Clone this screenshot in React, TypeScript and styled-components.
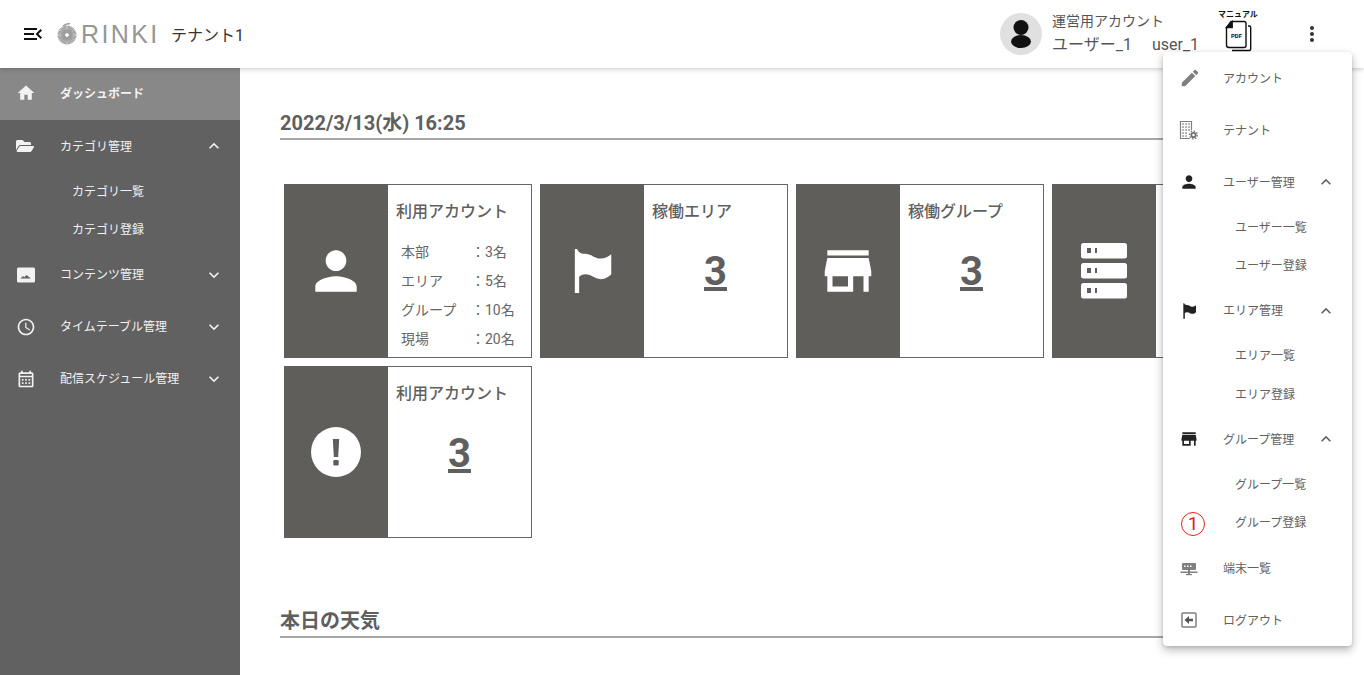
import React from "react";
import styled, { createGlobalStyle } from "styled-components";
import {
  MdMenuOpen,
  MdHome,
  MdOutlineWatchLater,
  MdOutlineCalendarMonth,
  MdEdit,
  MdPerson,
  MdStore,
  MdKeyboardArrowUp,
  MdKeyboardArrowDown,
  MdMoreVert,
} from "react-icons/md";
import { FaFolderOpen } from "react-icons/fa";

const GlobalStyle = createGlobalStyle`
  html, body {
    margin: 0;
    height: 100%;
    overflow: hidden;
    background: #fff;
  }
  body {
    font-family: Roboto, "Noto Sans CJK JP", sans-serif;
    color: #616161;
  }
  #root {
    height: 100%;
  }
`;

const Page = styled.div`
  position: relative;
  height: 675px;
  display: flex;
  flex-direction: column;
  overflow: hidden;
`;

const Header = styled.header`
  position: relative;
  z-index: 2;
  flex: 0 0 68px;
  display: flex;
  align-items: center;
  padding: 0 40px 0 21px;
  background: #fff;
  box-shadow: 0 1px 5px rgba(0, 0, 0, 0.22);
`;

const MenuToggle = styled(MdMenuOpen)`
  font-size: 24px;
  color: #111;
  margin-right: 12px;
`;

const Logo = styled.div`
  display: flex;
  align-items: center;
  gap: 3px;
  width: 114px;
  color: #969696;
`;

const LogoText = styled.span`
  font-family: "Liberation Sans", sans-serif;
  font-size: 25px;
  letter-spacing: 2.4px;
  line-height: 1;
`;

const TenantName = styled.div`
  font-size: 16px;
  color: #333;
`;

const HeaderRight = styled.div`
  margin-left: auto;
  display: flex;
  align-items: center;
`;

const Avatar = styled.div`
  width: 42px;
  height: 42px;
  border-radius: 50%;
  background: #e0e0e0;
  display: flex;
  align-items: center;
  justify-content: center;
  margin-right: 10px;
`;

const UserBlock = styled.div`
  width: 166px;
  color: #555;
`;

const UserRole = styled.div`
  font-size: 14px;
  line-height: 22px;
  margin-top: -1px;
`;

const UserName = styled.div`
  display: flex;
  gap: 20px;
  padding-top: 1px;
  font-size: 16px;
  line-height: 24px;
`;

const Manual = styled.div`
  width: 40px;
  margin-right: 42px;
  display: flex;
  flex-direction: column;
  align-items: center;
  margin-top: -7px;
  color: #111;
`;

const ManualLabel = styled.div`
  font-size: 8px;
  font-weight: 700;
  line-height: 10px;
  white-space: nowrap;
`;

const MoreButton = styled(MdMoreVert)`
  font-size: 24px;
  color: #333;
`;

const Body = styled.div`
  flex: 1;
  display: flex;
  min-height: 0;
`;

const Sidebar = styled.nav`
  flex: 0 0 240px;
  background: #616161;
  color: #f2f2f2;
`;

const NavRow = styled.div<{ $active?: boolean }>`
  height: 52px;
  box-sizing: border-box;
  display: flex;
  align-items: center;
  padding: 0 16px ${({ $active }) => ($active ? "2px" : "0")};
  font-size: 12px;
  background: ${({ $active }) => ($active ? "#888888" : "transparent")};
  font-weight: ${({ $active }) => ($active ? 700 : 400)};
`;

const NavIcon = styled.div<{ $color?: string; $size?: number }>`
  flex: 0 0 44px;
  display: flex;
  align-items: center;
  font-size: ${({ $size }) => $size ?? 20}px;
  color: ${({ $color }) => $color ?? "inherit"};
`;

const NavLabel = styled.div`
  flex: 1;
  white-space: nowrap;
  padding-bottom: 2px;
`;

const Chevron = styled.div`
  display: flex;
  font-size: 20px;
`;

const SubList = styled.div`
  height: 76.7px;
`;

const SubRow = styled.div`
  position: relative;
  height: 38.35px;
  box-sizing: border-box;
  display: flex;
  align-items: center;
  padding: 0 0 2px 72px;
  font-size: 12px;
`;

const Main = styled.main`
  flex: 1;
  padding: 40px 40px 0;
  min-width: 0;
`;

const SectionTitle = styled.h2`
  margin: 0;
  padding-top: 1px;
  font-size: 20px;
  font-weight: 700;
  line-height: 29px;
  color: #5f5f5f;
  border-bottom: 2px solid #a8a8a8;
`;

const CardGrid = styled.div`
  display: flex;
  flex-wrap: wrap;
  gap: 8px;
  padding: 44px 4px 0;
  margin-bottom: 68px;
`;

const Card = styled.div`
  width: 248px;
  min-height: 172px;
  box-sizing: border-box;
  display: flex;
  border: 1px solid #666;
  background: #fff;
`;

const CardIcon = styled.div`
  flex: 0 0 104px;
  margin: -1px 0 -1px -1px;
  background: #5f5e5a;
  color: #fff;
  display: flex;
  align-items: center;
  justify-content: center;
`;

const CardContent = styled.div`
  flex: 1;
  padding: 15px 8px 3px;
  min-width: 0;
`;

const CardTitle = styled.div`
  font-size: 16px;
  font-weight: 500;
  line-height: 24px;
  color: #5f5f5f;
  white-space: nowrap;
`;

const CardValue = styled.a`
  display: block;
  margin-top: 24px;
  text-align: center;
  font-size: 40px;
  font-weight: 700;
  line-height: 48px;
  color: #5f5f5f;
  text-decoration: underline;
`;

const BreakdownList = styled.div`
  margin-top: 14px;
  padding-left: 5px;
`;

const BreakdownRow = styled.div`
  display: flex;
  font-size: 14px;
  line-height: 29px;
  color: #666;
`;

const BreakdownKey = styled.span`
  flex: 0 0 70px;
`;

const DropdownMenu = styled.div`
  position: absolute;
  z-index: 3;
  top: 52px;
  right: 12px;
  width: 189px;
  height: 594px;
  border-radius: 4px;
  background: #fff;
  color: #616161;
  box-shadow: 0 4px 10px rgba(0, 0, 0, 0.28), 0 1px 3px rgba(0, 0, 0, 0.12);
`;

const StepMark = styled.span`
  position: absolute;
  left: 18px;
  top: 8px;
  width: 24px;
  height: 24px;
  box-sizing: border-box;
  border: 1.5px solid #e2231a;
  border-radius: 50%;
  color: #e2231a;
  font-size: 19px;
  line-height: 21px;
  text-align: center;
`;

const PdfIcon = () => (
  <svg width="30" height="32" viewBox="0 0 30 31" fill="none" stroke="#111" strokeWidth="1.4">
    <path d="M25 5.500h1.200a1.500 1.500 0 0 1 1.500 1.500v21.500a1.500 1.500 0 0 1-1.500 1.500H9" />
    <path d="M8 1h13a2 2 0 0 1 2 2v22a2 2 0 0 1-2 2H6a2.500 2.500 0 0 1-2.500-2.500V7z" fill="#fff" />
    <path d="M3.500 7 9.200 1.200V7z" fill="#111" />
    <text x="13.500" y="17" textAnchor="middle" fontSize="6" fontWeight="700" fill="#111" stroke="none" fontFamily="Roboto, sans-serif">
      PDF
    </text>
  </svg>
);

const AvatarIcon = () => (
  <svg width="22" height="28" viewBox="0 0 22 28" fill="#111">
    <ellipse cx="11" cy="7.500" rx="7.500" ry="7.500" />
    <ellipse cx="11" cy="21.500" rx="10" ry="6.500" />
  </svg>
);

const SunburstLogo = () => {
  const rays = Array.from({ length: 40 }, (_, i) => (i * 360) / 40);
  return (
    <svg width="21" height="23" viewBox="0 0 21 23" stroke="#9c9c9c" strokeWidth="1.100">
      {rays.map((deg) => (
        <line key={deg} x1="10" y1="10" x2="10" y2="2.500" transform={`rotate(${deg} 10 12)`} />
      ))}
      <path d="M6 3C8 1.500 11 .5 13 .5" fill="none" strokeWidth="1.300" />
    </svg>
  );
};

const WavyFlag = ({ size, className }: { size: number; className?: string }) => (
  <svg className={className} width={size} height={size} viewBox="0 0 40 48" fill="currentColor">
    <path d="M0 1h2.500c.6 2.500 3 5 8 5 7 0 9 5 16.500 5 4.500 0 8.500-2.500 11-4.500v21c-2.500 2.500-6 5-11 5-6.500 0-9-5-16-5-3 0-5 1.100-6.500 2.500V47H0z" />
  </svg>
);

const CardFlag = styled(WavyFlag)`
  margin-left: 4px;
`;

const MenuFlag = styled(WavyFlag)`
  margin-left: 3px;
`;

const ImageIcon = () => (
  <svg width="20" height="20" viewBox="0 0 20 20">
    <rect x="1" y="2.500" width="18" height="15" rx="1.500" fill="currentColor" />
    <path d="M4.500 13.500 7 11l1.200 1.200L10.500 10l4.500 3.500z" fill="#616161" />
  </svg>
);

const BuildingGearIcon = () => (
  <svg width="20" height="20" viewBox="0 0 20 20" fill="none">
    <path d="M1.500 1.500h11v17h-11z" stroke="#808080" strokeWidth="1.200" />
    <g fill="#808080">
      {[4, 7, 10].map((y) =>
        [4, 7, 10].map((x) => <rect key={`${x}-${y}`} x={x - 0.7} y={y - 0.7} width="1.500" height="1.500" />)
      )}
      <rect x="3.300" y="12.300" width="1.500" height="1.500" />
      <rect x="6.300" y="12.300" width="1.500" height="1.500" />
      <rect x="3.300" y="15.300" width="1.500" height="1.500" />
      <rect x="6.300" y="15.300" width="1.500" height="1.500" />
    </g>
    <circle cx="14.500" cy="15" r="5" fill="#fff" />
    <circle cx="14.500" cy="15" r="2.200" stroke="#707070" strokeWidth="1.800" />
    <circle cx="14.500" cy="15" r="3.900" stroke="#707070" strokeWidth="1.200" strokeDasharray="1.500 1.500" />
  </svg>
);

const TerminalIcon = () => (
  <svg width="20" height="20" viewBox="0 0 20 20" fill="#808080">
    <rect x="3" y="5" width="14" height="7" rx="1" />
    <rect x="5" y="7.500" width="1.500" height="1.500" fill="#fff" />
    <rect x="8" y="7.500" width="1.500" height="1.500" fill="#fff" />
    <rect x="11" y="7.500" width="1.500" height="1.500" fill="#fff" />
    <rect x="9" y="12" width="2" height="5" />
    <rect x="1.500" y="13.500" width="17" height="1.500" />
    <rect x="7" y="16" width="6" height="1.200" />
  </svg>
);

const LogoutIcon = () => (
  <svg width="20" height="20" viewBox="0 0 20 20">
    <rect x="3" y="3" width="14" height="14" rx="1" fill="none" stroke="#808080" strokeWidth="1.500" />
    <path d="M5.500 10l4.500-4v2.700h4v2.600h-4V14z" fill="#555" />
  </svg>
);

const ServerStackIcon = () => (
  <svg width="46" height="56" viewBox="0 0 46 56" fill="#fff">
    {[0, 20, 40].map((y) => (
      <g key={y}>
        <rect x="0" y={y} width="46" height="15.500" rx="2.500" />
        <rect x="6" y={y + 5} width="4" height="5" fill="#5f5e5a" />
        <rect x="14" y={y + 5} width="2" height="5" fill="#5f5e5a" />
      </g>
    ))}
  </svg>
);

const AlertIcon = () => (
  <svg width="50" height="50" viewBox="0 0 50 50">
    <circle cx="25" cy="25" r="25" fill="#fff" />
    <path d="M21.800 12h6.400l-1 18h-4.400z" fill="#5f5e5a" />
    <rect x="22.300" y="33" width="5.400" height="5.400" rx="1" fill="#5f5e5a" />
  </svg>
);

const sidebarGroups = [
  { icon: <FaFolderOpen size={18} />, label: "カテゴリ管理", open: true, items: ["カテゴリ一覧", "カテゴリ登録"] },
  { icon: <ImageIcon />, label: "コンテンツ管理" },
  { icon: <MdOutlineWatchLater />, label: "タイムテーブル管理" },
  { icon: <MdOutlineCalendarMonth />, label: "配信スケジュール管理" },
];

const breakdown = [
  ["本部", "3名"],
  ["エリア", "5名"],
  ["グループ", "10名"],
  ["現場", "20名"],
];

const App = () => {
  return (
    <Page>
      <GlobalStyle />
      <Header>
        <MenuToggle />
        <Logo>
          <SunburstLogo />
          <LogoText>RINKI</LogoText>
        </Logo>
        <TenantName>テナント1</TenantName>
        <HeaderRight>
          <Avatar>
            <AvatarIcon />
          </Avatar>
          <UserBlock>
            <UserRole>運営用アカウント</UserRole>
            <UserName>
              <span>ユーザー_1</span>
              <span>user_1</span>
            </UserName>
          </UserBlock>
          <Manual>
            <ManualLabel>マニュアル</ManualLabel>
            <PdfIcon />
          </Manual>
          <MoreButton />
        </HeaderRight>
      </Header>

      <Body>
        <Sidebar>
          <NavRow $active>
            <NavIcon>
              <MdHome />
            </NavIcon>
            <NavLabel>ダッシュボード</NavLabel>
          </NavRow>
          {sidebarGroups.map((group) => (
            <React.Fragment key={group.label}>
              <NavRow>
                <NavIcon>{group.icon}</NavIcon>
                <NavLabel>{group.label}</NavLabel>
                <Chevron>{group.open ? <MdKeyboardArrowUp /> : <MdKeyboardArrowDown />}</Chevron>
              </NavRow>
              {group.items && (
                <SubList>
                  {group.items.map((item) => (
                    <SubRow key={item}>{item}</SubRow>
                  ))}
                </SubList>
              )}
            </React.Fragment>
          ))}
        </Sidebar>

        <Main>
          <SectionTitle>2022/3/13(水) 16:25</SectionTitle>
          <CardGrid>
            <Card>
              <CardIcon>
                <MdPerson size={62} />
              </CardIcon>
              <CardContent>
                <CardTitle>利用アカウント</CardTitle>
                <BreakdownList>
                  {breakdown.map(([key, value]) => (
                    <BreakdownRow key={key}>
                      <BreakdownKey>{key}</BreakdownKey>
                      <span>：{value}</span>
                    </BreakdownRow>
                  ))}
                </BreakdownList>
              </CardContent>
            </Card>
            <Card>
              <CardIcon>
                <CardFlag size={46} />
              </CardIcon>
              <CardContent>
                <CardTitle>稼働エリア</CardTitle>
                <CardValue>3</CardValue>
              </CardContent>
            </Card>
            <Card>
              <CardIcon>
                <MdStore size={62} />
              </CardIcon>
              <CardContent>
                <CardTitle>稼働グループ</CardTitle>
                <CardValue>3</CardValue>
              </CardContent>
            </Card>
            <Card>
              <CardIcon>
                <ServerStackIcon />
              </CardIcon>
              <CardContent>
                <CardTitle>稼働端末</CardTitle>
                <CardValue>3</CardValue>
              </CardContent>
            </Card>
            <Card>
              <CardIcon>
                <AlertIcon />
              </CardIcon>
              <CardContent>
                <CardTitle>利用アカウント</CardTitle>
                <CardValue>3</CardValue>
              </CardContent>
            </Card>
          </CardGrid>
          <SectionTitle>本日の天気</SectionTitle>
        </Main>
      </Body>

      <DropdownMenu>
        <NavRow>
          <NavIcon $color="#808080" $size={22}>
            <MdEdit />
          </NavIcon>
          <NavLabel>アカウント</NavLabel>
        </NavRow>
        <NavRow>
          <NavIcon>
            <BuildingGearIcon />
          </NavIcon>
          <NavLabel>テナント</NavLabel>
        </NavRow>
        <NavRow>
          <NavIcon $color="#222">
            <MdPerson />
          </NavIcon>
          <NavLabel>ユーザー管理</NavLabel>
          <Chevron>
            <MdKeyboardArrowUp />
          </Chevron>
        </NavRow>
        <SubList>
          <SubRow>ユーザー一覧</SubRow>
          <SubRow>ユーザー登録</SubRow>
        </SubList>
        <NavRow>
          <NavIcon $color="#222">
            <MenuFlag size={16} />
          </NavIcon>
          <NavLabel>エリア管理</NavLabel>
          <Chevron>
            <MdKeyboardArrowUp />
          </Chevron>
        </NavRow>
        <SubList>
          <SubRow>エリア一覧</SubRow>
          <SubRow>エリア登録</SubRow>
        </SubList>
        <NavRow>
          <NavIcon $color="#222">
            <MdStore />
          </NavIcon>
          <NavLabel>グループ管理</NavLabel>
          <Chevron>
            <MdKeyboardArrowUp />
          </Chevron>
        </NavRow>
        <SubList>
          <SubRow>グループ一覧</SubRow>
          <SubRow>
            <StepMark>1</StepMark>
            グループ登録
          </SubRow>
        </SubList>
        <NavRow>
          <NavIcon>
            <TerminalIcon />
          </NavIcon>
          <NavLabel>端末一覧</NavLabel>
        </NavRow>
        <NavRow>
          <NavIcon>
            <LogoutIcon />
          </NavIcon>
          <NavLabel>ログアウト</NavLabel>
        </NavRow>
      </DropdownMenu>
    </Page>
  );
};

export default App;
